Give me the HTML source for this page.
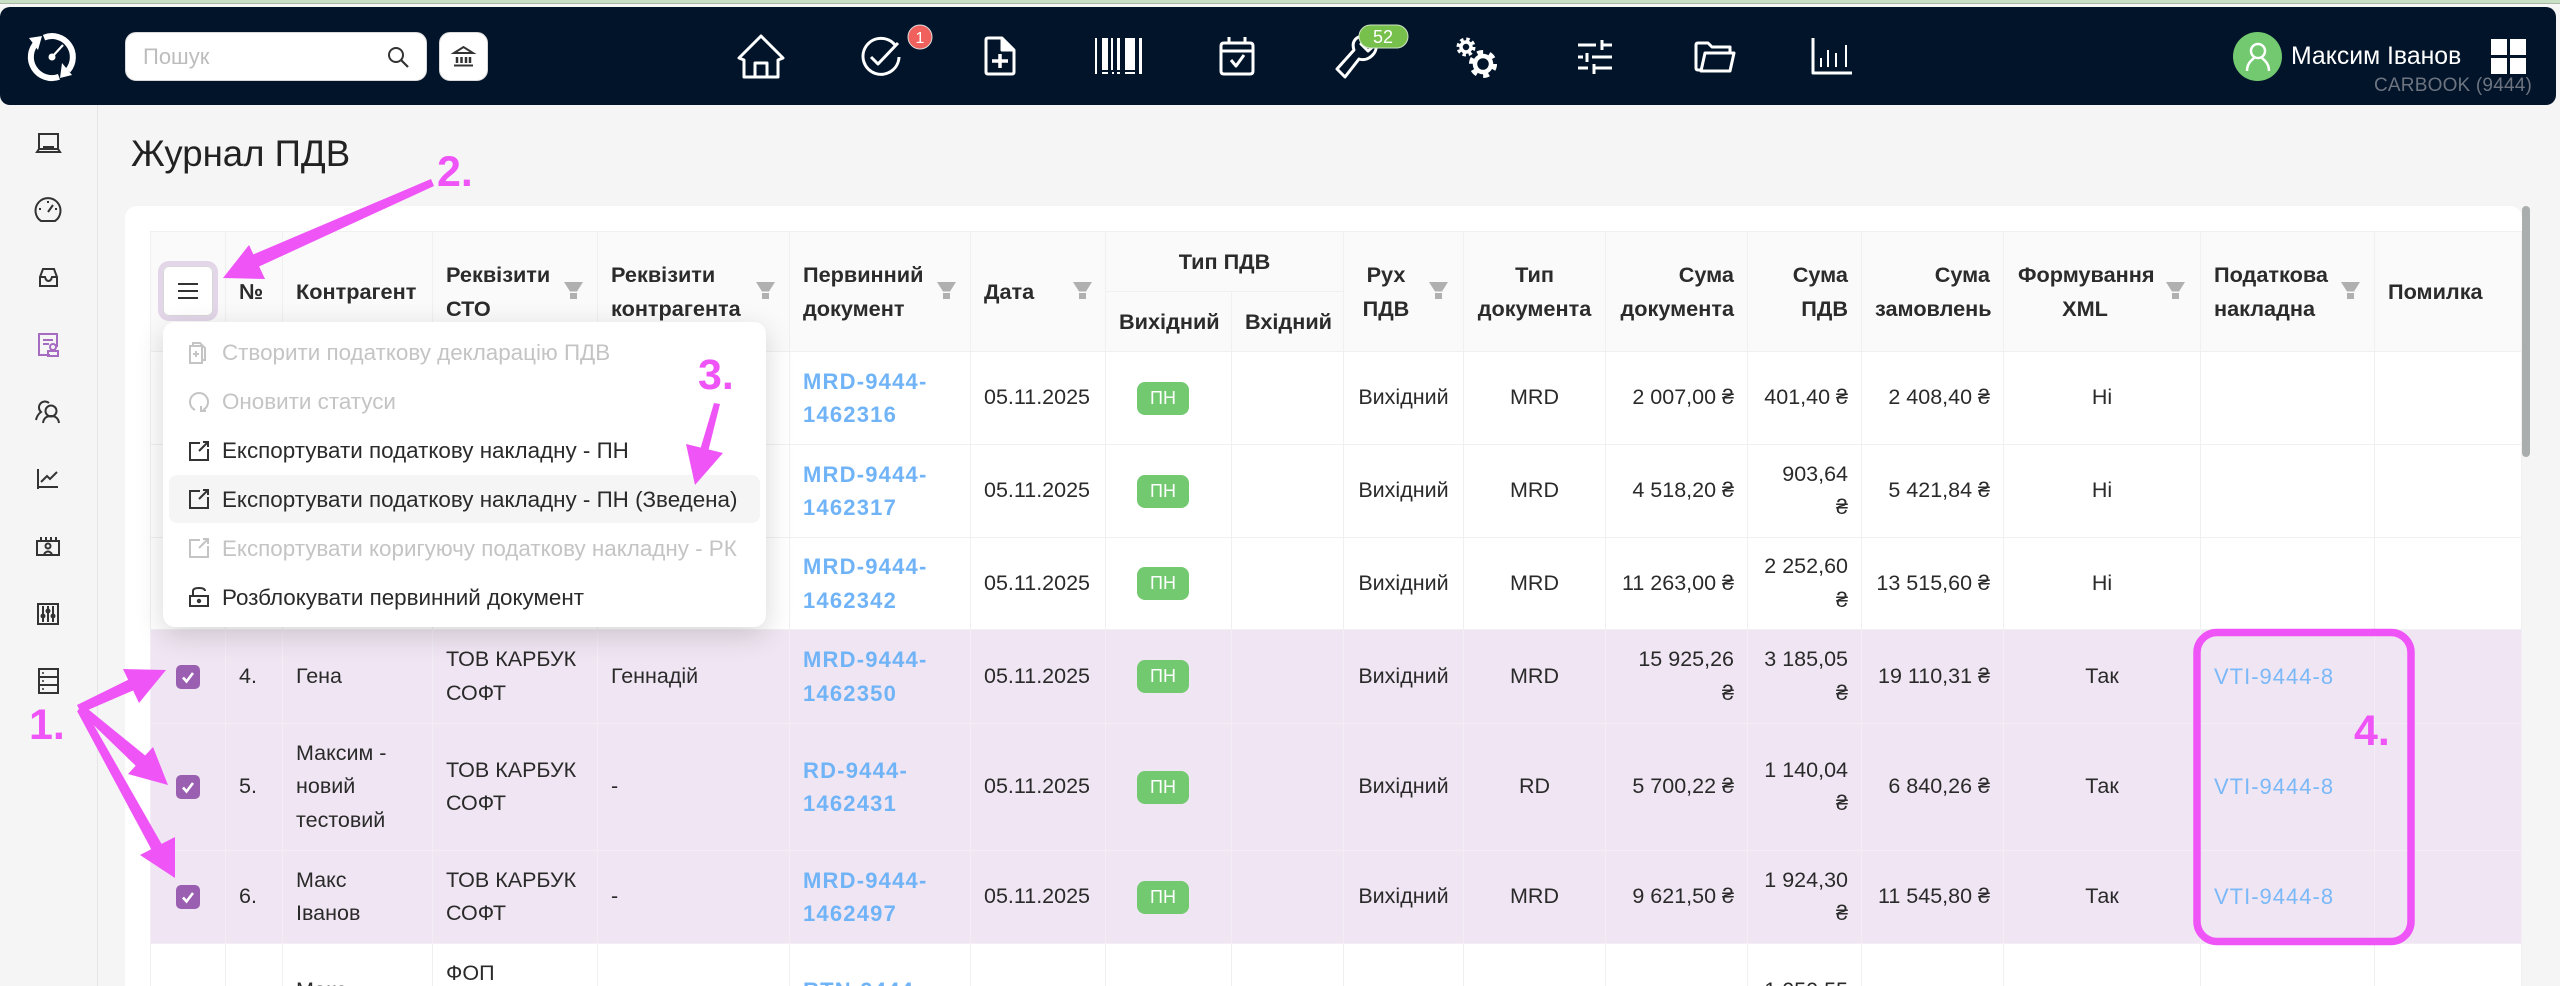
<!DOCTYPE html>
<html lang="uk"><head><meta charset="utf-8"><title>Журнал ПДВ</title>
<style>
*{box-sizing:border-box}
html,body{margin:0;padding:0;width:2560px;height:986px;overflow:hidden;background:#f5f5f5;font-family:"Liberation Sans","DejaVu Sans",sans-serif;color:#2a2a2a}
#page{position:relative;width:2560px;height:986px;overflow:hidden;background:#f5f5f5}
.a{position:absolute}
#strip{left:0;top:0;width:2560px;height:4px;background:#c8dfc5;border-bottom:1px solid #a9b8a6}
#strip2{left:0;top:4px;width:2560px;height:3px;background:#f7f7f7}
#hdr{left:0;top:7px;width:2556px;height:98px;background:#02142a;border-radius:10px}
#search{left:125px;top:32px;width:302px;height:49px;background:#fff;border-radius:11px;border:1px solid #d9d9d9;color:#bdbdbd;font-size:22px;line-height:47px;padding-left:17px}
#bank{left:439px;top:32px;width:49px;height:49px;background:#fff;border-radius:11px;border:1px solid #d9d9d9}
#side{left:97px;top:105px;width:1px;height:881px;background:#e6e6e6}
#title{left:131px;top:132px;font-size:36.6px;line-height:44px;color:#222;white-space:nowrap}
#card{left:125px;top:206px;width:2397px;height:780px;background:#fff;border-radius:12px 12px 0 0}
#sb{left:2522px;top:206px;width:8px;height:251px;background:#a9adae;border-radius:4px}
table{position:absolute;left:150px;top:231px;width:2371px;border-collapse:collapse;table-layout:fixed;font-size:21.5px;line-height:33.5px}
th,td{border:1px solid #f0f0f0;padding:0 13px 0 13px;overflow:hidden;white-space:nowrap;font-weight:400}
th{background:#fafafa;font-weight:700;color:#2b2b2b;font-size:21.7px;text-align:left}
.c{text-align:center}.r{text-align:right}
tr.p td{background:#f0e6f3;border-color:#f3edf5}
.lnk{color:#70b4f7;font-weight:700;font-size:22px;letter-spacing:1.2px}
.v{color:#7ab8f8;font-size:22px;letter-spacing:1px}
.pn{display:inline-block;width:52px;height:33px;line-height:33px;background:#72c96f;color:#fff;border-radius:8px;text-align:center;font-size:18px;margin-left:-11px;vertical-align:middle}
.box{display:block;width:24px;height:24px;background:#9a5fb0;border-radius:5px;margin-left:12px;position:relative}
tr.last{height:44px}
tr.last td{vertical-align:top;border-bottom:0}
.cl1{height:14px;margin-top:30px;overflow:hidden}
.cl0{height:30px;margin-top:13px;overflow:hidden}
#mbtn{left:158px;top:261px;width:60px;height:60px;border-radius:11px;background:#fff;border:5px solid #e2d6e8;box-shadow:inset 0 0 0 1px #d8d8d8}
#menu{left:163px;top:322px;width:603px;height:305px;background:#fff;border-radius:12px;box-shadow:0 8px 28px rgba(0,0,0,.16)}
.mi{position:absolute;left:59px;font-size:22.4px;line-height:30px;white-space:nowrap;color:#2a2a2a}
.mi.d{color:#c4c4c4}
#hl{left:169px;top:475px;width:591px;height:48px;background:#f5f5f5;border-radius:8px}
#name{left:2291px;top:42px;font-size:24.8px;line-height:30px;color:#fff;white-space:nowrap}
#org{left:2374px;top:75px;font-size:19px;line-height:22px;color:#6d7480;white-space:nowrap;letter-spacing:.2px}
#avatar{left:2233px;top:32px;width:49px;height:49px;background:#72c96f;border-radius:50%}
svg{position:absolute;left:0;top:0;overflow:visible}
</style></head><body>
<div id="page">
<div class="a" id="strip"></div><div class="a" id="strip2"></div>
<div class="a" id="hdr"></div>
<div class="a" id="search">Пошук</div>
<div class="a" id="bank"></div>
<div class="a" id="avatar"></div>
<div class="a" id="name">Максим Іванов</div>
<div class="a" id="org">CARBOOK (9444)</div>
<div class="a" id="side"></div>
<div class="a" id="title">Журнал ПДВ</div>
<div class="a" id="card"></div>
<div class="a" id="sb"></div>

<table>
<colgroup><col style="width:75px"><col style="width:57px"><col style="width:150px"><col style="width:165px"><col style="width:192px"><col style="width:181px"><col style="width:135px"><col style="width:126px"><col style="width:112px"><col style="width:120px"><col style="width:142px"><col style="width:142px"><col style="width:114px"><col style="width:142px"><col style="width:197px"><col style="width:174px"><col style="width:147px"></colgroup>
<tr style="height:60px">
<th rowspan="2"></th><th rowspan="2">№</th><th rowspan="2">Контрагент</th><th rowspan="2">Реквізити<br>СТО</th><th rowspan="2">Реквізити<br>контрагента</th><th rowspan="2">Первинний<br>документ</th><th rowspan="2">Дата</th>
<th colspan="2" class="c">Тип ПДВ</th>
<th rowspan="2" class="c" style="padding:0 49px 0 14px">Рух<br>ПДВ</th><th rowspan="2" class="c">Тип<br>документа</th><th rowspan="2" class="r">Сума<br>документа</th><th rowspan="2" class="r">Сума<br>ПДВ</th><th rowspan="2" class="r">Сума<br>замовлень</th><th rowspan="2" class="c" style="padding:0 48px 0 14px">Формування<br>XML</th><th rowspan="2">Податкова<br>накладна</th><th rowspan="2">Помилка</th>
</tr>
<tr style="height:60px"><th class="c">Вихідний</th><th class="c">Вхідний</th></tr>
<tr style="height:93px"><td></td><td></td><td></td><td></td><td></td><td class="lnk">MRD-9444-<br>1462316</td><td>05.11.2025</td><td class="c"><span class="pn">ПН</span></td><td></td><td class="c">Вихідний</td><td class="c">MRD</td><td class="r">2 007,00 ₴</td><td class="r">401,40 ₴</td><td class="r">2 408,40 ₴</td><td class="c">Ні</td><td></td><td></td></tr>
<tr style="height:93px"><td></td><td></td><td></td><td></td><td></td><td class="lnk">MRD-9444-<br>1462317</td><td>05.11.2025</td><td class="c"><span class="pn">ПН</span></td><td></td><td class="c">Вихідний</td><td class="c">MRD</td><td class="r">4 518,20 ₴</td><td class="r">903,64<br>₴</td><td class="r">5 421,84 ₴</td><td class="c">Ні</td><td></td><td></td></tr>
<tr style="height:92px"><td></td><td></td><td></td><td></td><td></td><td class="lnk">MRD-9444-<br>1462342</td><td>05.11.2025</td><td class="c"><span class="pn">ПН</span></td><td></td><td class="c">Вихідний</td><td class="c">MRD</td><td class="r">11 263,00 ₴</td><td class="r">2 252,60<br>₴</td><td class="r">13 515,60 ₴</td><td class="c">Ні</td><td></td><td></td></tr>
<tr class="p" style="height:94px"><td><span class="box"><svg width="24" height="24" viewBox="0 0 24 24"><path d="M7 12.5l3.5 4L17 8" fill="none" stroke="#fff" stroke-width="2.6"/></svg></span></td><td>4.</td><td>Гена</td><td>ТОВ КАРБУК<br>СОФТ</td><td>Геннадій</td><td class="lnk">MRD-9444-<br>1462350</td><td>05.11.2025</td><td class="c"><span class="pn">ПН</span></td><td></td><td class="c">Вихідний</td><td class="c">MRD</td><td class="r">15 925,26<br>₴</td><td class="r">3 185,05<br>₴</td><td class="r">19 110,31 ₴</td><td class="c">Так</td><td class="v">VTI-9444-8</td><td></td></tr>
<tr class="p" style="height:127px"><td><span class="box"><svg width="24" height="24" viewBox="0 0 24 24"><path d="M7 12.5l3.5 4L17 8" fill="none" stroke="#fff" stroke-width="2.6"/></svg></span></td><td>5.</td><td>Максим -<br>новий<br>тестовий</td><td>ТОВ КАРБУК<br>СОФТ</td><td>-</td><td class="lnk">RD-9444-<br>1462431</td><td>05.11.2025</td><td class="c"><span class="pn">ПН</span></td><td></td><td class="c">Вихідний</td><td class="c">RD</td><td class="r">5 700,22 ₴</td><td class="r">1 140,04<br>₴</td><td class="r">6 840,26 ₴</td><td class="c">Так</td><td class="v">VTI-9444-8</td><td></td></tr>
<tr class="p" style="height:93px"><td><span class="box"><svg width="24" height="24" viewBox="0 0 24 24"><path d="M7 12.5l3.5 4L17 8" fill="none" stroke="#fff" stroke-width="2.6"/></svg></span></td><td>6.</td><td>Макс<br>Іванов</td><td>ТОВ КАРБУК<br>СОФТ</td><td>-</td><td class="lnk">MRD-9444-<br>1462497</td><td>05.11.2025</td><td class="c"><span class="pn">ПН</span></td><td></td><td class="c">Вихідний</td><td class="c">MRD</td><td class="r">9 621,50 ₴</td><td class="r">1 924,30<br>₴</td><td class="r">11 545,80 ₴</td><td class="c">Так</td><td class="v">VTI-9444-8</td><td></td></tr>
<tr class="last"><td></td><td></td><td><div class="cl1">Макс</div></td><td><div class="cl0">ФОП</div></td><td></td><td class="lnk"><div class="cl1">RTN-9444-</div></td><td></td><td></td><td></td><td></td><td></td><td></td><td class="r"><div class="cl1">1 050,55</div></td><td></td><td></td><td></td><td></td></tr>
</table>

<svg width="2560" height="986" viewBox="0 0 2560 986">
<defs>
<g id="fn"><path d="M0 0H19L13 9.500H6Z" fill="#b0b0b0"/><rect x="6" y="11" width="7" height="6" fill="#b0b0b0"/></g>
</defs>
<use href="#fn" x="564" y="282"/><use href="#fn" x="756" y="282"/><use href="#fn" x="937" y="282"/><use href="#fn" x="1073" y="282"/><use href="#fn" x="1429" y="282"/><use href="#fn" x="2166" y="282"/><use href="#fn" x="2341" y="282"/>

<!-- logo -->
<g fill="none" stroke="#fff" stroke-width="6">
<path d="M37.100 42.100A21 21 0 0 0 59 76.800"/>
<path d="M44 37.600A21 21 0 0 1 68 70.500"/>
</g>
<path d="M29 38L42 36L38 50ZM62 63L72 75L60 78Z" fill="#fff"/>
<circle cx="52" cy="57" r="3.500" fill="#fff"/><path d="M52 57L63 45" stroke="#fff" stroke-width="2.200"/>

<!-- search, bank -->
<circle cx="396" cy="55" r="7" fill="none" stroke="#333" stroke-width="2"/><path d="M401 60L408 67" stroke="#333" stroke-width="2.200"/>
<g stroke="#333" fill="none" stroke-width="2"><path d="M454 53L463.500 47L473 53Z"/><path d="M457 57V63M461.500 57V63M466 57V63M470 57V63" stroke-width="2.500"/><path d="M454 65.500H473"/></g>

<!-- nav icons -->
<g fill="none" stroke="#fff" stroke-width="3" stroke-linejoin="round">
<path d="M761 36L739 58L744 60V77H778V60L783 58Z"/><path d="M755 77V63H767V77"/>
<path d="M895 45A18 18 0 1 0 899 57"/><path d="M871 57L878 64L898 43"/>
<path d="M988 38H1002L1014 50V72Q1014 74 1012 74H988Q986 74 986 72V40Q986 38 988 38Z"/><path d="M1002 38V50H1014" fill="#fff"/><path d="M992 61H1008M1000 54V68" stroke-width="3.500"/>
<path d="M1221 46Q1221 43 1224 43H1250Q1253 43 1253 46V71Q1253 74 1250 74H1224Q1221 74 1221 71Z"/><path d="M1229 37V43M1245 37V43M1221 51H1253"/><path d="M1231 60L1236 66L1244 55"/>
<path d="M1345 77L1337 69L1354 50C1350 38 1362 34 1368 36L1361 44L1368 51L1376 44C1378 53 1368 62 1359 59Z"/>
<path d="M1578 45H1596M1602 40V50M1602 45H1612M1578 57H1583M1587 53V62M1592 57H1612M1578 68H1588M1594 64V74M1594 68H1612"/>
<path d="M1701 70H1698Q1696 70 1696 68V45Q1696 43 1698 43H1708L1712 47H1730V53"/><path d="M1701 71L1705 53H1734L1730 71Z"/>
<path d="M1813 38V73H1852"/>
<path d="M1821 67V58M1828 67V50M1836 67V53M1846 67V45" stroke-width="2"/>
<circle cx="1466" cy="47" r="5" stroke-width="3.500"/><circle cx="1466" cy="47" r="8" stroke-width="3" stroke-dasharray="3.500 2.780"/>
<circle cx="1483" cy="64" r="8" stroke-width="4.500"/><circle cx="1483" cy="64" r="12" stroke-width="4" stroke-dasharray="6 6.570"/>
</g>
<g fill="#fff"><rect x="1095" y="38" width="2" height="36"/><rect x="1102" y="38" width="6" height="32"/><rect x="1111" y="38" width="2" height="32"/><rect x="1117" y="38" width="3" height="32"/><rect x="1125" y="38" width="10" height="32"/><rect x="1139" y="38" width="3" height="36"/><rect x="1102" y="72" width="6" height="2"/><rect x="1112" y="72" width="2" height="2"/><rect x="1117" y="72" width="3" height="2"/><rect x="1125" y="72" width="10" height="2"/></g>
<circle cx="920" cy="37" r="12" fill="#f0605c" stroke="#ddd" stroke-width="1"/><text x="920" y="43" font-size="16" fill="#fff" text-anchor="middle" font-family="Liberation Sans">1</text>
<rect x="1359" y="25" width="49" height="23" rx="11.500" fill="#76c04b" stroke="#cfe3c4" stroke-width="1"/><text x="1383" y="43" font-size="18" fill="#fff" text-anchor="middle" font-family="Liberation Sans">52</text>
<g fill="none" stroke="#fff" stroke-width="2.500"><circle cx="2258" cy="51" r="7"/><path d="M2247 71C2247 63 2252 60 2254 58M2269 71C2269 63 2264 60 2262 58"/></g>
<g fill="#fff"><rect x="2491" y="39" width="16" height="16"/><rect x="2510" y="39" width="16" height="16"/><rect x="2491" y="58" width="16" height="16"/><rect x="2510" y="58" width="16" height="16"/></g>

<!-- sidebar -->
<g fill="none" stroke="#333" stroke-width="2">
<path d="M39 149V134H58V149M37 152H60L58 149H39Z"/><path d="M44 149V147H53V149"/>
<path d="M41 221A12.500 12.500 0 1 1 55 221Z"/><path d="M48 212L53 205M48 201V203M39 209H41M57 209H55"/>
<path d="M40 277L43 269H54L57 277V286H40ZM40 277H45Q46 281 48.500 281Q51 281 52 277H57"/>
<circle cx="51" cy="411" r="5.500"/><path d="M43 423Q44 416 51 416Q58 416 59 423"/><path d="M49 403A5.500 5.500 0 1 0 41 412Q37 415 36 420"/>
<path d="M38 489V469M38 487H58M41 482L47 476L50 479L57 472"/>
<path d="M37 541H59V555H37ZM41 537V542M46 537V542M51 537V542M56 537V542"/><circle cx="48" cy="546" r="2.500"/><path d="M44 554Q48 549 52 554"/>
<rect x="38" y="604" width="20" height="20"/><path d="M43 606V622M48 606V622M53 606V622"/><circle cx="43" cy="616" r="1.500" fill="#333"/><circle cx="48" cy="611" r="1.500" fill="#333"/><circle cx="53" cy="616" r="1.500" fill="#333"/>
<rect x="39" y="669" width="19" height="24"/><path d="M39 677H58M39 685H58"/>
</g>
<g fill="#333"><circle cx="43" cy="673" r="1"/><circle cx="43" cy="681" r="1"/><circle cx="43" cy="689" r="1"/></g>
<g fill="none" stroke="#a56cc1" stroke-width="2"><path d="M50 355H39V334H57V347"/><path d="M43 340H53M43 344H49"/><circle cx="53" cy="347" r="3"/><rect x="48" y="351" width="10" height="5"/></g>
</svg>

<div class="a" id="mbtn"><svg width="20" height="16" style="left:15px;top:17px" viewBox="0 0 20 16"><path d="M0 1H20M0 8H20M0 15H20" stroke="#333" stroke-width="2"/></svg></div>

<div class="a" id="menu">
<div class="mi d" style="top:16px">Створити податкову декларацію ПДВ</div>
<div class="mi d" style="top:65px">Оновити статуси</div>
<div class="mi" style="top:114px">Експортувати податкову накладну - ПН</div>
</div>
<div class="a" id="hl"></div>
<div class="a" style="left:163px;top:322px;width:603px;height:305px">
<div class="mi" style="top:163px">Експортувати податкову накладну - ПН (Зведена)</div>
<div class="mi d" style="top:212px">Експортувати коригуючу податкову накладну - РК</div>
<div class="mi" style="top:261px">Розблокувати первинний документ</div>
<svg width="603" height="305" viewBox="0 0 603 305">
<g fill="none" stroke="#c4c4c4" stroke-width="2"><path d="M27 24H39V41H27ZM30 24V21H37L42 26V38H39"/><path d="M30 32H36M33 29V35"/><path d="M32 88A9 9 0 1 1 40 88M38 84V89H43"/></g>
<g fill="none" stroke="#333" stroke-width="2"><path d="M37 121H27V138H45V127M36 129L44 121M40 120H45V125"/><path d="M37 169H27V186H45V175M36 177L44 169M40 168H45V173"/><path d="M27 274H45V284H27ZM30 274V269Q30 266 36 266Q42 266 42 269"/><circle cx="36" cy="279" r="1.200"/></g>
<g fill="none" stroke="#c4c4c4" stroke-width="2"><path d="M37 218H27V235H45V224M36 226L44 218M40 217H45V222"/></g>
</svg>
</div>

<svg width="2560" height="986" viewBox="0 0 2560 986">
<g fill="#ef54f7" stroke="none">
<polygon points="431,179 434,186 258,267 252,255"/><polygon points="223,278 249,245 265,279"/>
<polygon points="714,403 720,404 708,452 700,450"/><polygon points="695,485 686,444 723,453"/>
<polygon points="166,670 123,669 139,703"/><polygon points="81,713 77,705 136,676 141,687"/>
<polygon points="168,785 153,747 128,774"/><polygon points="78,710 83,705 147,757 137,767"/>
<polygon points="175,878 175,837 140,855"/><polygon points="77,711 84,708 165,850 156,858"/>
</g>
<rect x="2197" y="632.500" width="214" height="309" rx="20" fill="none" stroke="#ef54f7" stroke-width="7.500"/>
<g fill="#ef54f7" font-family="Liberation Sans" font-weight="700" font-size="43">
<text x="437" y="186">2.</text><text x="698" y="389">3.</text><text x="29" y="739">1.</text><text x="2354" y="745">4.</text>
</g>
</svg>
</div>
</body></html>
